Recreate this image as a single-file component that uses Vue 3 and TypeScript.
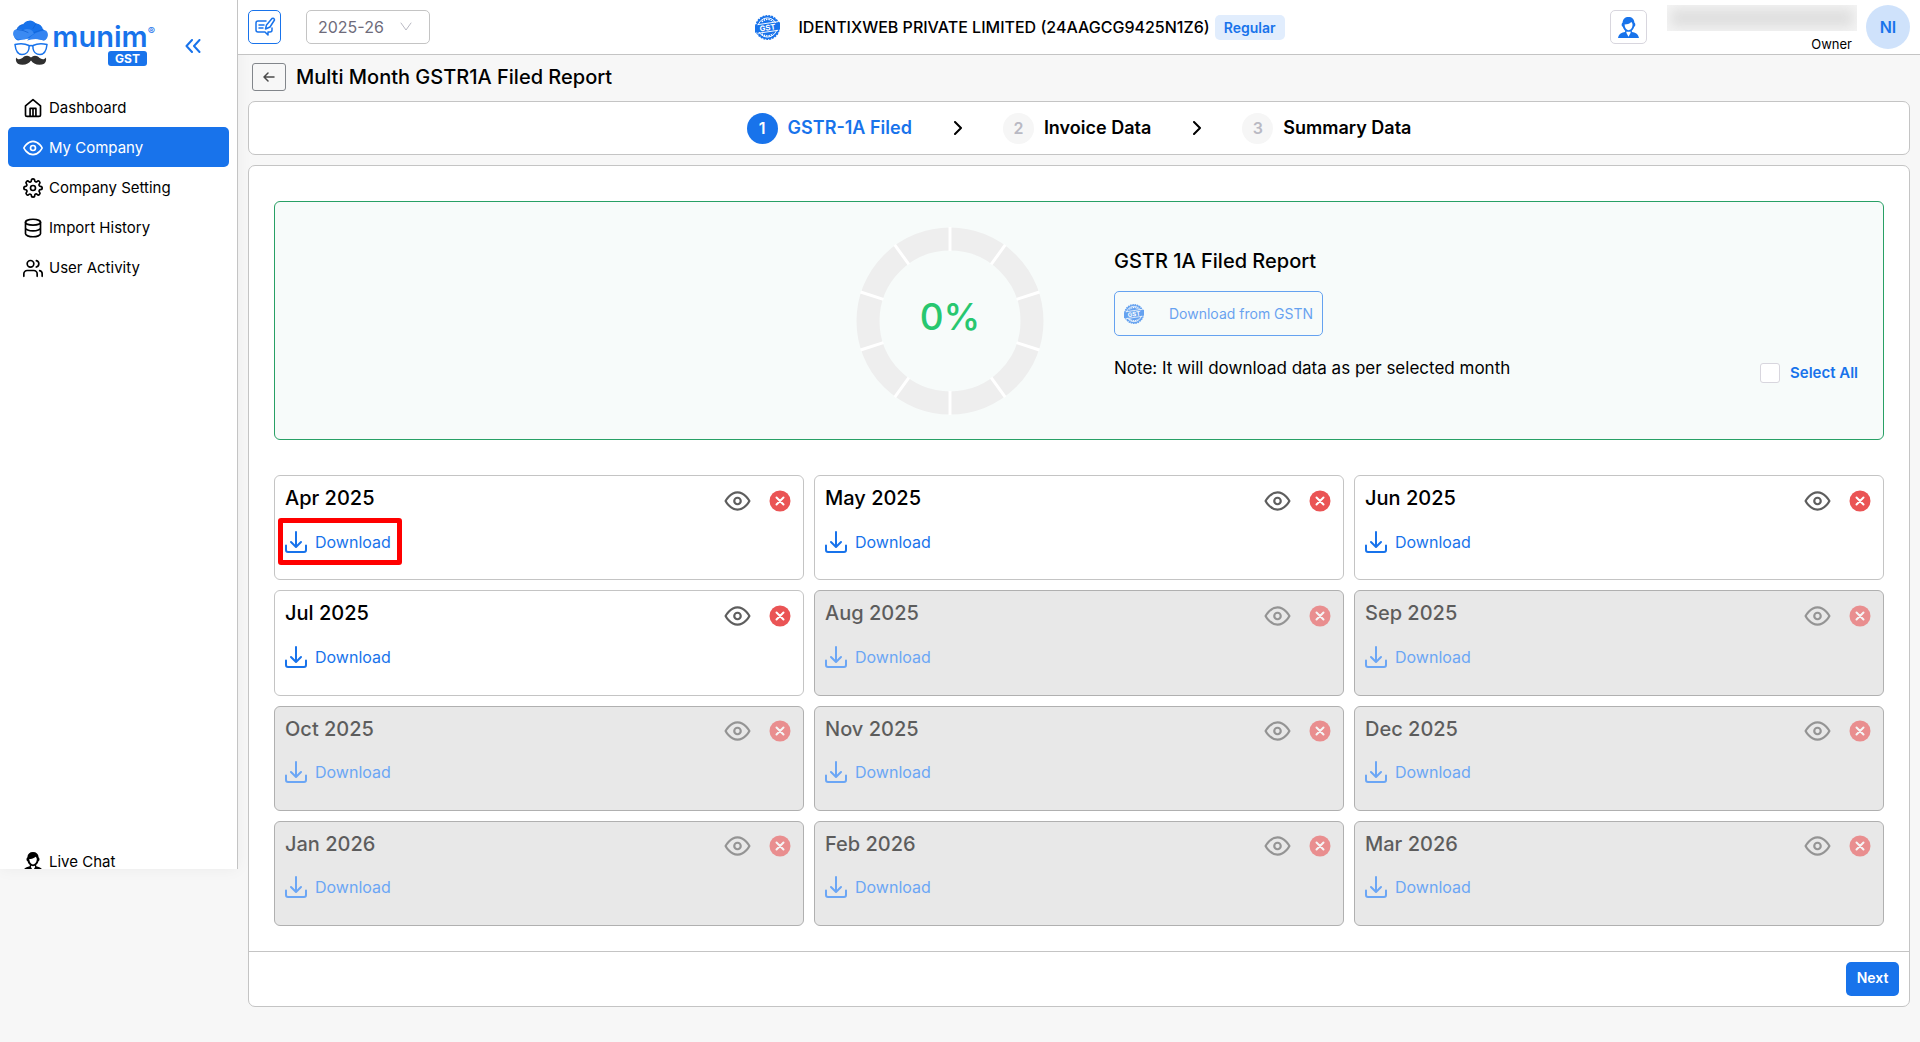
<script setup lang="ts">
import { ref } from 'vue'

interface NavItem {
  label: string
  icon: string
}

interface MonthCard {
  label: string
  enabled: boolean
  highlighted?: boolean
}

const navItems: NavItem[] = [
  { label: 'Dashboard', icon: 'i-home' },
  { label: 'My Company', icon: 'i-eye' },
  { label: 'Company Setting', icon: 'i-gear' },
  { label: 'Import History', icon: 'i-database' },
  { label: 'User Activity', icon: 'i-users' },
]
const activeNav = ref('My Company')

const steps: string[] = ['GSTR-1A Filed', 'Invoice Data', 'Summary Data']
const activeStep = ref(0)

const months: MonthCard[] = [
  { label: 'Apr 2025', enabled: true, highlighted: true },
  { label: 'May 2025', enabled: true },
  { label: 'Jun 2025', enabled: true },
  { label: 'Jul 2025', enabled: true },
  { label: 'Aug 2025', enabled: false },
  { label: 'Sep 2025', enabled: false },
  { label: 'Oct 2025', enabled: false },
  { label: 'Nov 2025', enabled: false },
  { label: 'Dec 2025', enabled: false },
  { label: 'Jan 2026', enabled: false },
  { label: 'Feb 2026', enabled: false },
  { label: 'Mar 2026', enabled: false },
]

const year = ref('2025-26')
const selectAll = ref(false)
const progress = ref(0)
const ticks: number[] = Array.from({ length: 10 }, (_, i) => i * 36)
</script>

<template>
  <svg class="sprite" aria-hidden="true">
    <symbol id="i-home" viewBox="0 0 24 24"><path d="M3 9.500 12 2l9 7.500V20a2 2 0 0 1-2 2H5a2 2 0 0 1-2-2zM8.500 22V12.500h7V22M12 13v9" /></symbol>
    <symbol id="i-eye" viewBox="0 0 24 24"><path d="M1 12s4-8 11-8 11 8 11 8-4 8-11 8-11-8-11-8z" /><circle cx="12" cy="12" r="3" /></symbol>
    <symbol id="i-gear" viewBox="0 0 24 24"><circle cx="12" cy="12" r="3" /><path d="M19.400 15a1.650 1.650 0 0 0 .33 1.820l.06.06a2 2 0 0 1-2.830 2.830l-.06-.06a1.650 1.650 0 0 0-1.820-.33 1.650 1.650 0 0 0-1 1.510V21a2 2 0 0 1-4 0v-.09A1.650 1.650 0 0 0 9 19.400a1.650 1.650 0 0 0-1.820.33l-.06.06a2 2 0 0 1-2.830-2.830l.06-.06a1.650 1.650 0 0 0 .33-1.820 1.650 1.650 0 0 0-1.510-1H3a2 2 0 0 1 0-4h.09A1.650 1.650 0 0 0 4.600 9a1.650 1.650 0 0 0-.33-1.820l-.06-.06a2 2 0 0 1 2.830-2.830l.06.06a1.650 1.650 0 0 0 1.820.33H9a1.650 1.650 0 0 0 1-1.510V3a2 2 0 0 1 4 0v.09a1.650 1.650 0 0 0 1 1.510 1.650 1.650 0 0 0 1.820-.33l.06-.06a2 2 0 0 1 2.830 2.830l-.06.06a1.650 1.650 0 0 0-.33 1.820V9a1.650 1.650 0 0 0 1.510 1H21a2 2 0 0 1 0 4h-.09a1.650 1.650 0 0 0-1.510 1z" /></symbol>
    <symbol id="i-database" viewBox="0 0 24 24"><ellipse cx="12" cy="5" rx="9" ry="3.500" /><path d="M21 12c0 1.800-4 3.500-9 3.500s-9-1.700-9-3.500M3 5v14c0 1.800 4 3.500 9 3.500s9-1.700 9-3.500V5" /></symbol>
    <symbol id="i-users" viewBox="0 0 24 24"><path d="M17 22v-3a4 4 0 0 0-4-4H5a4 4 0 0 0-4 4v3M23 22v-3a4 4 0 0 0-3-3.870M16 3.130a4 4 0 0 1 0 7.750" /><circle cx="9" cy="7" r="4" /></symbol>
    <symbol id="i-agent" viewBox="0 0 24 24"><path class="flat" fill="currentColor" fill-rule="evenodd" d="M12 0c4 0 6.500 2.300 6.800 6.500 1.300.5 1.500 4-.3 4.600-.5 2-1.500 3.600-2.800 4.600l.3 1.300c3.500 1 7 1.200 8 7H0c1-5.800 4.500-6 8-7l.3-1.300c-1.300-1-2.300-2.600-2.800-4.600-1.800-.6-1.600-4.100-.3-4.600C5.500 2.300 8 0 12 0zM7.500 8.500c.2 4.300 2.400 6.500 4.500 6.500s4.600-2.200 4.600-6.500c-.1-1.200-.7-2-1.400-2.700C13 8 10.300 8.500 7.500 8.500zM9.800 16.500 9.500 18l2.500 4.500 2.500-4.500-.3-1.500c-1.300.6-3 .6-4.400 0z" /></symbol>
    <symbol id="i-download" viewBox="0 0 22 22"><path d="M11 1v14M6 11l5 5 5-5M1 14.500V19q0 2 2 2h16q2 0 2-2v-4.500" /></symbol>
    <symbol id="i-stamp" viewBox="0 0 26 26">
      <circle cx="13" cy="13" r="12" fill="#1873eb" stroke="#1873eb" stroke-width="2" stroke-dasharray="2 1" stroke-linecap="butt" />
      <circle cx="13" cy="13" r="10" fill="none" stroke="#fff" stroke-width="1" />
      <path d="M7 7q6-5 12 0M7 19.500q6 4.500 12 0" fill="none" stroke="#fff" stroke-width="1.500" stroke-dasharray="1.500 1" stroke-linecap="butt" />
      <path class="flat" d="M0 11 26 7.500v7.500L0 18.500z" fill="#1873eb" />
      <path d="M3 10 23.500 7M3 19l20.500-3" stroke="#fff" stroke-width="1" />
    </symbol>
  </svg>

  <div class="app">
    <aside class="sidebar">
      <div class="brand">
        <svg class="brand-mark" viewBox="0 0 38 46" aria-hidden="true">
          <g class="flat">
            <path d="M6 20a6 6 0 0 1-1-11 7 7 0 0 1 6-5 8 8 0 0 1 13-1 7 7 0 0 1 7 6 6 6 0 0 1 1 11q-13-4-26 0z" fill="#1873eb" />
            <path d="M11 10a7 7 0 0 1 11 3l-9 6H6a6 6 0 0 1-4-9 7 7 0 0 1 9 0z" fill="#3b8af2" />
            <path d="M15 20q8-10 19-10a6 6 0 0 1-2 10q-8-3-17 0z" fill="#3484f1" />
          </g>
          <path d="M11 4q-5 1-6 5l6 1 5 2M22 12l9-3M24 3l-3 5" stroke="#1262d4" stroke-width=".8" />
          <path d="M3 24q8-2 14 1v3q-1 6-7 6t-7-10zM35 24q-8-2-14 1v3q1 6 7 6t7-10zM17 26q2-2 4 0" fill="#fff" stroke="#1873eb" stroke-width="1.500" />
          <path class="flat" d="M19 37q3-3 7-1c3 3 6 4 8 1q1 6-4 7-8 1-11-4-3 5-11 4-5-1-4-7c2 3 5 2 8-1q4-2 7 1z" fill="#303030" />
        </svg>
        <div class="brand-text">
          <span class="brand-name">munim<sup>®</sup></span>
          <span class="brand-tag">GST</span>
        </div>
        <button class="collapse" type="button" aria-label="Collapse menu">
          <svg viewBox="0 0 16 14"><path d="M7 1 1.500 7 7 13M14.500 1 9 7l5.500 6" /></svg>
        </button>
      </div>
      <nav class="nav">
        <a v-for="item in navItems" :key="item.label" href="#" class="nav-item" :class="{ active: item.label === activeNav }" @click.prevent="activeNav = item.label">
          <svg class="nav-icon"><use :href="'#' + item.icon" /></svg>{{ item.label }}
        </a>
      </nav>
      <a href="#" class="nav-item chat"><svg class="nav-icon"><use href="#i-agent" /></svg>Live Chat</a>
    </aside>

    <div class="page">
      <header class="topbar">
        <div class="top-left">
          <button class="icon-btn edit" type="button" aria-label="Feedback">
            <svg viewBox="0 0 22 20"><path d="M12 4H4Q2 4 2 6v7q0 2 2 2h7l3 3v-3h2q2 0 2-2v-2M5 8h5M5 11h4M11.500 12l1-4L18 1.500q2-1 2.500 1.500L16 10z" /></svg>
          </button>
          <label class="year">
            <select v-model="year" aria-label="Financial year"><option>2025-26</option></select>
            <svg viewBox="0 0 12 10"><path d="m1 1 5 7 5-7" /></svg>
          </label>
        </div>
        <div class="company">
          <svg class="stamp" viewBox="0 0 26 26"><use href="#i-stamp" /><text x="13" y="16" transform="rotate(-8 13 13)">GST</text></svg>
          <span class="company-name">IDENTIXWEB PRIVATE LIMITED (24AAGCG9425N1Z6)</span>
          <span class="badge">Regular</span>
        </div>
        <div class="top-right">
          <button class="icon-btn agent" type="button" aria-label="Support"><svg><use href="#i-agent" /></svg></button>
          <div class="account">
            <div class="redacted"></div>
            <span>Owner</span>
          </div>
          <div class="avatar">NI</div>
        </div>
      </header>

      <main class="content">
        <div class="title-row">
          <button class="back" type="button" aria-label="Back"><svg viewBox="0 0 12 10"><path d="M11 5H1M5 1 1 5l4 4" /></svg></button>
          <h1>Multi Month GSTR1A Filed Report</h1>
        </div>

        <ol class="card stepper">
          <li v-for="(step, i) in steps" :key="step" :class="{ current: i === activeStep }">
            <svg v-if="i > 0" class="arrow" viewBox="0 0 9 14"><path d="m1 1 6 6-6 6" /></svg>
            <span class="num">{{ i + 1 }}</span>
            <span>{{ step }}</span>
          </li>
        </ol>

        <section class="card report">
          <div class="report-body">
            <div class="summary">
              <div class="summary-chart">
                <div class="donut">
                  <svg viewBox="-94 -94 188 188" aria-hidden="true">
                    <circle r="82" stroke="#eee" stroke-width="23" />
                    <path v-for="t in ticks" :key="t" d="M0-94V-70" stroke="#fff" stroke-width="3" :transform="`rotate(${t})`" />
                  </svg>
                  <span class="percent">{{ progress }}%</span>
                </div>
              </div>
              <div class="summary-info">
                <div class="summary-text">
                  <h2>GSTR 1A Filed Report</h2>
                  <button class="gstn" type="button" disabled>
                    <svg class="stamp" viewBox="0 0 26 26"><use href="#i-stamp" /><text x="13" y="16" transform="rotate(-8 13 13)">GST</text></svg>Download from GSTN
                  </button>
                  <p>Note: It will download data as per selected month</p>
                </div>
                <label class="select-all"><input v-model="selectAll" type="checkbox" />Select All</label>
              </div>
            </div>

            <div class="months">
              <article v-for="m in months" :key="m.label" class="month" :class="{ disabled: !m.enabled }">
                <div class="month-head">
                  <h3>{{ m.label }}</h3>
                  <div class="month-actions">
                    <button type="button" :disabled="!m.enabled" :aria-label="'View ' + m.label"><svg class="view"><use href="#i-eye" /></svg></button>
                    <svg class="status" viewBox="0 0 22 22"><circle class="flat" cx="11" cy="11" r="10.500" fill="#ea5455" /><path d="m7.500 7.500 7 7M14.500 7.500l-7 7" stroke="#fff" /></svg>
                  </div>
                </div>
                <button class="download" :class="{ marked: m.highlighted }" type="button" :disabled="!m.enabled">
                  <svg><use href="#i-download" /></svg>Download
                </button>
              </article>
            </div>
          </div>
          <footer class="report-foot"><button class="next" type="button">Next</button></footer>
        </section>
      </main>
    </div>
  </div>
</template>

<style>
body {
  background: #f7f7f7;
}
</style>

<style scoped>
.app {
  display: flex;
  align-items: flex-start;
  min-height: 100vh;
  font: 16px/24px Inter, "Noto Sans", sans-serif;
  color: #000;
}
.app *,
.app {
  box-sizing: border-box;
}
.sprite {
  position: absolute;
  width: 0;
  height: 0;
}
svg {
  display: block;
  flex: none;
  fill: none;
  stroke: currentColor;
  stroke-width: 2;
  stroke-linecap: round;
  stroke-linejoin: round;
}
.flat {
  stroke: none;
}
button {
  display: flex;
  align-items: center;
  justify-content: center;
  padding: 0;
  border: 0;
  background: none;
  font: inherit;
  color: inherit;
}
h1, h2, h3, p, ol {
  margin: 0;
  padding: 0;
  font-size: 20px;
  font-weight: 500;
}

.sidebar {
  display: flex;
  flex: none;
  flex-direction: column;
  width: 238px;
  height: calc(100vh - 173px);
  overflow: hidden;
  background: #fff;
  border-right: 1px solid #c4c4c4;
  box-shadow: 0 0 15px rgba(34, 41, 47, 0.05);
}
.brand {
  display: flex;
  flex: none;
  height: 87px;
  padding: 20px 36px 0 12px;
}
.brand-mark {
  width: 38px;
  height: 47px;
}
.brand-text {
  display: flex;
  flex-direction: column;
  align-items: flex-end;
  width: 105px;
}
.brand-name {
  height: 31px;
  line-height: 34px;
  font-size: 29px;
  font-weight: 600;
  color: #1873eb;
}
.brand-name sup {
  font-size: 11px;
  line-height: 1px;
  vertical-align: 12px;
}
.brand-tag {
  width: 39px;
  margin-right: 8px;
  border-radius: 3px;
  background: #1873eb;
  color: #fff;
  font-size: 12px;
  font-weight: 700;
  line-height: 15px;
  text-align: center;
}
.collapse {
  height: 14px;
  margin: 19px 0 0 auto;
  color: #1873eb;
}
.collapse svg {
  width: 16px;
  height: 14px;
}
.nav {
  display: flex;
  flex-direction: column;
}
.nav-item {
  display: flex;
  flex: none;
  align-items: center;
  gap: 6px;
  height: 40px;
  margin: 0 8px;
  padding: 2px 0 0 15px;
  border-radius: 5px;
  color: #000;
  font-size: 15px;
  text-decoration: none;
}
.nav-item.active {
  background: #1873eb;
  color: #fff;
}
.nav-icon {
  width: 20px;
  height: 20px;
}
.chat {
  margin-top: auto;
  margin-bottom: -12px;
  line-height: 12px;
}

.page {
  flex: 1;
  min-width: 0;
}
.topbar {
  display: flex;
  justify-content: space-between;
  height: 55px;
  padding: 0 10px;
  background: #fff;
  border-bottom: 1px solid #c4c4c4;
}
.top-left,
.company,
.top-right {
  display: flex;
  align-items: center;
}
.icon-btn {
  height: 34px;
  border: 1px solid #d8d6de;
  border-radius: 5px;
  color: #1873eb;
}
.edit {
  width: 33px;
  margin-right: 25px;
  border-color: #1873eb;
}
.edit svg {
  width: 22px;
  height: 20px;
  stroke-width: 1.5;
}
.year {
  display: flex;
  align-items: center;
  width: 124px;
  height: 34px;
  padding: 0 17px 0 11px;
  border: 1px solid #c4c4c4;
  border-radius: 5px;
  color: #b9b9c3;
}
.year select {
  flex: 1;
  min-width: 0;
  appearance: none;
  padding: 0;
  border: 0;
  background: none;
  font: inherit;
  color: #6e6b7b;
}
.year svg {
  width: 12px;
  height: 10px;
  stroke-width: 1;
}
.stamp {
  width: 25px;
  height: 25px;
}
.stamp text {
  fill: #fff;
  stroke: none;
  font-size: 8px;
  font-weight: 700;
  text-anchor: middle;
}
.company .stamp {
  margin-right: 18px;
}
.company-name {
  font-weight: 500;
}
.badge {
  margin-left: 5px;
  padding: 0 9px;
  border-radius: 5px;
  background: #e1edfd;
  color: #1873eb;
  font-size: 14px;
  font-weight: 600;
  line-height: 25px;
}
.agent {
  width: 37px;
}
.agent svg {
  width: 21px;
  height: 21px;
}
.account {
  display: flex;
  flex-direction: column;
  align-items: flex-end;
  margin: 0 9px 0 20px;
  padding-top: 3px;
  font-size: 13px;
  line-height: 16px;
}
.account span {
  margin: 5px 5px 0 0;
}
.redacted {
  width: 190px;
  height: 26px;
  background: #dfdfdf;
  box-shadow: inset 0 0 12px 4px #f4f4f4;
}
.avatar {
  width: 44px;
  height: 44px;
  border-radius: 50%;
  background: #cfe2fb;
  color: #1873eb;
  font-weight: 600;
  line-height: 44px;
  text-align: center;
}

.content {
  padding: 8px 10px 35px;
}
.title-row {
  display: flex;
  align-items: center;
  gap: 10px;
  padding-left: 4px;
  height: 28px;
  margin-bottom: 10px;
}
.back {
  width: 34px;
  height: 28px;
  border: 1px solid #82868b;
  border-radius: 3px;
  color: #4b4b4b;
}
.back svg {
  width: 12px;
  height: 10px;
  stroke-width: 1.5;
}
.card {
  background: #fff;
  border: 1px solid #c4c4c4;
  border-radius: 7px;
}
.stepper {
  display: flex;
  align-items: center;
  justify-content: center;
  height: 54px;
  margin-bottom: 10px;
  list-style: none;
  font-size: 18px;
  font-weight: 600;
}
.stepper li {
  display: flex;
  align-items: center;
  gap: 10px;
}
.stepper .arrow {
  width: 9px;
  height: 14px;
  margin: 0 30px 0 42px;
}
.num {
  width: 31px;
  height: 31px;
  border-radius: 50%;
  background: #f6f6f6;
  color: #b9b9c3;
  font-size: 16px;
  line-height: 31px;
  text-align: center;
}
.current {
  color: #1873eb;
}
.current .num {
  background: #1873eb;
  color: #fff;
}

.report-body {
  padding: 35px 25px 25px;
}
.summary {
  display: grid;
  grid-template-columns: 1fr 1fr;
  height: 239px;
  margin-bottom: 35px;
  border: 1px solid #28a065;
  border-radius: 6px;
  background: #f7fbfa;
}
.summary-chart,
.summary-info {
  display: flex;
}
.summary-chart {
  align-items: center;
  justify-content: flex-end;
  padding-right: 35px;
}
.donut {
  display: grid;
  place-items: center;
}
.donut > * {
  grid-area: 1 / 1;
}
.donut svg {
  width: 188px;
  height: 188px;
  stroke-linecap: butt;
}
.percent {
  padding-bottom: 8px;
  color: #28c76f;
  font-size: 37px;
  font-weight: 500;
  line-height: 48px;
}
.summary-info {
  justify-content: space-between;
  padding: 47px 25px 0 35px;
}
.summary-text p {
  font-size: 17px;
  font-weight: 400;
}
.gstn {
  gap: 25px;
  height: 45px;
  margin: 18px 0 20px;
  padding: 0 9px;
  border: 1px solid #1873eb;
  border-radius: 5px;
  color: #1873eb;
  font-size: 14px;
  opacity: 0.65;
}
.gstn .stamp {
  width: 20px;
  height: 20px;
}
.select-all {
  display: flex;
  align-items: center;
  align-self: flex-start;
  gap: 10px;
  margin-top: 112px;
  color: #1873eb;
  font-size: 15px;
  font-weight: 600;
}
.select-all input {
  appearance: none;
  width: 20px;
  height: 20px;
  margin: 0;
  border: 1px solid #d8d6de;
  border-radius: 3px;
  background: #fff;
}

.months {
  display: grid;
  grid-template-columns: repeat(3, 1fr);
  grid-auto-rows: 1fr;
  gap: 10px;
  min-height: 451px;
}
.month {
  padding: 10px 12px 10px 10px;
  border: 1px solid #c4c4c4;
  border-radius: 6px;
}
.month-head,
.month-actions {
  display: flex;
  justify-content: space-between;
}
.month-actions {
  align-items: center;
  gap: 18px;
  padding-top: 3px;
}
.month-head {
  height: 26px;
}
.view {
  width: 27px;
  height: 26px;
  color: #5e5e5e;
}
.status {
  width: 22px;
  height: 22px;
}
.download {
  gap: 8px;
  height: 47px;
  margin: 6px 0 0 -7px;
  padding: 0 6px 0 2px;
  border: 5px solid transparent;
  border-radius: 3px;
  color: #1873eb;
}
.download.marked {
  border-color: #f00;
}
.download svg {
  width: 22px;
  height: 22px;
}
.month.disabled {
  background: #e8e8e8;
  border-color: #b0b0b0;
}
.disabled h3,
.disabled .view,
.disabled .status {
  opacity: 0.6;
}
.disabled .download {
  color: #6ba6f5;
}
.report-foot {
  display: flex;
  justify-content: flex-end;
  padding: 10px;
  border-top: 1px solid #c4c4c4;
}
.next {
  width: 53px;
  height: 34px;
  padding-bottom: 2px;
  border-radius: 5px;
  background: #1873eb;
  color: #fff;
  font-size: 14px;
  font-weight: 600;
}
</style>
